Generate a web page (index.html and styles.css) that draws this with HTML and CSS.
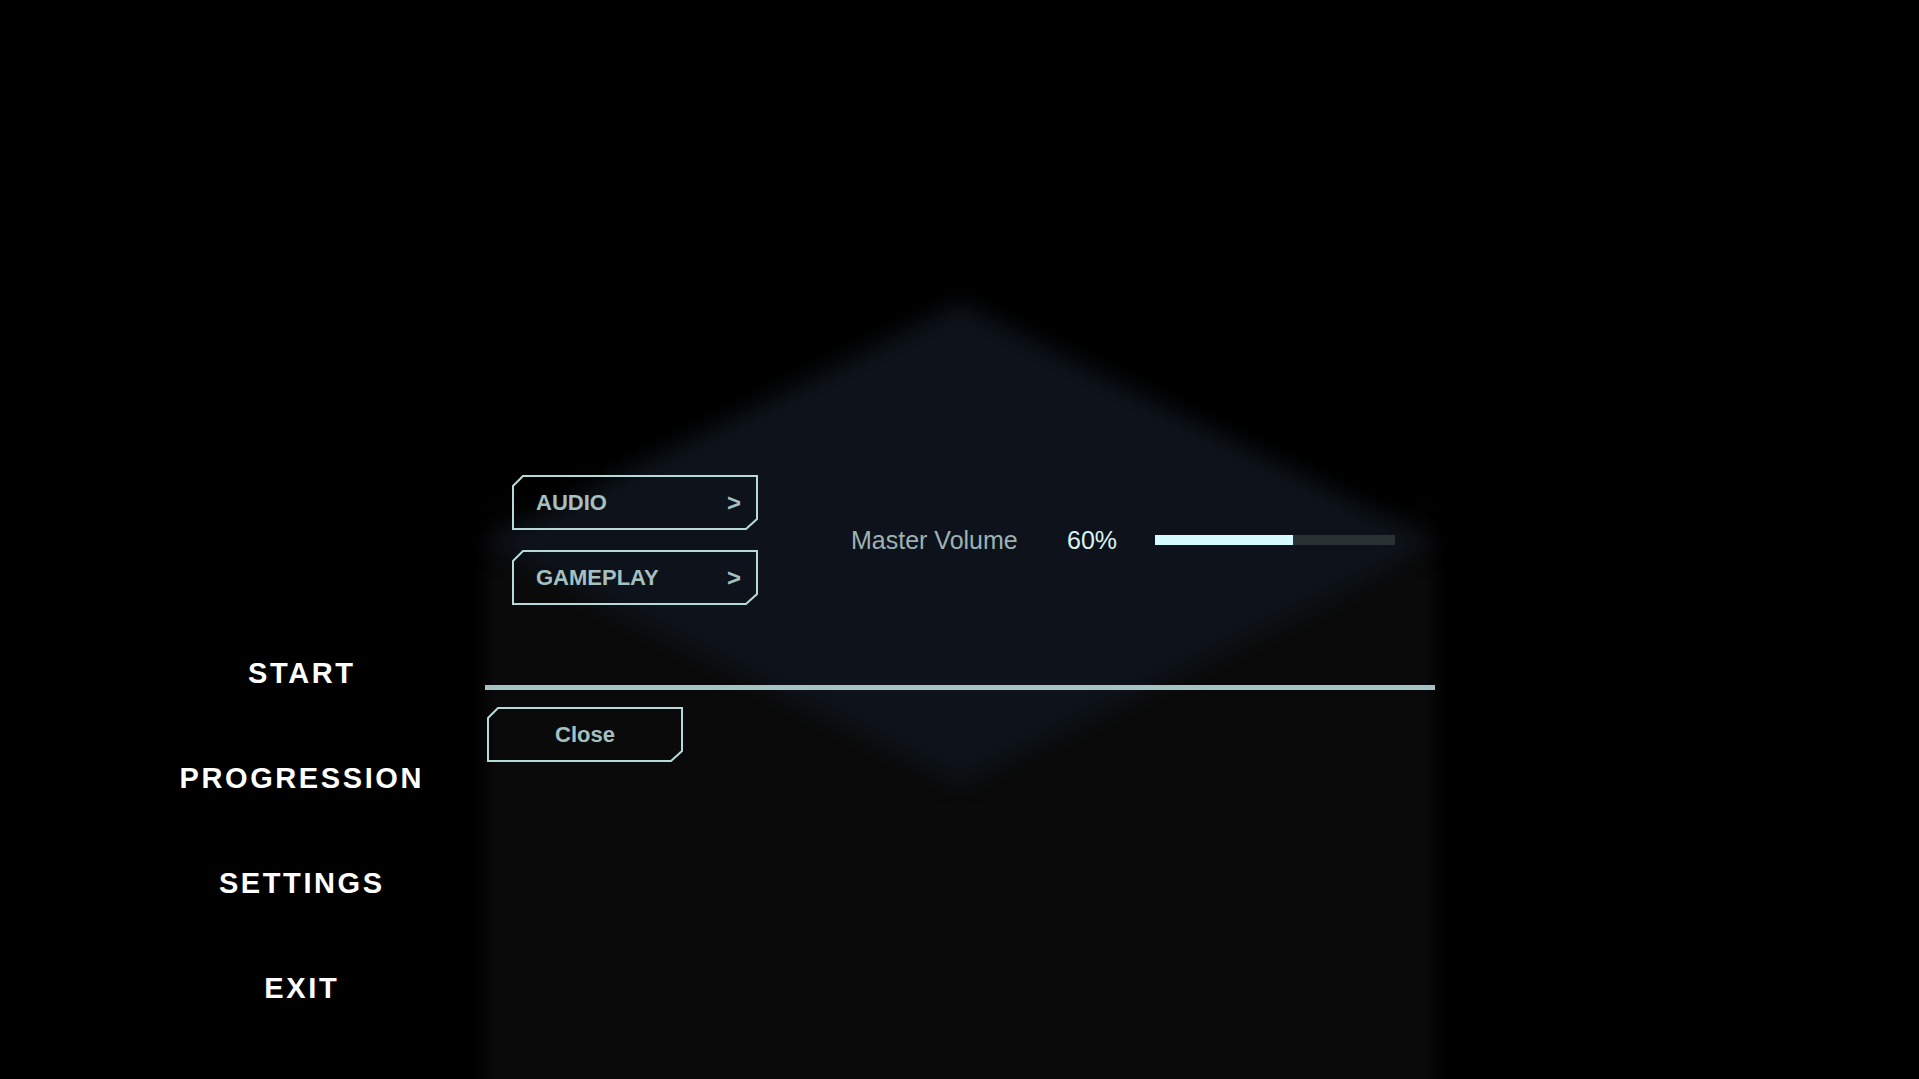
FILE: index.html
```html
<!DOCTYPE html>
<html lang="en">
<head>
    <meta charset="UTF-8">
    <meta name="viewport" content="width=device-width, initial-scale=1.0">
    <title>Settings</title>
    <link rel="stylesheet" href="styles.css">
</head>
<body>
    <div class="screen">
        <nav class="main-menu">
            <a class="menu-item">START</a>
            <a class="menu-item">PROGRESSION</a>
            <a class="menu-item">SETTINGS</a>
            <a class="menu-item">EXIT</a>
        </nav>

        <section class="settings-panel">
            <!-- soft diamond glow behind the panel content -->
            <div class="panel-glow"><div class="glow-shape"></div></div>

            <div class="settings-body">
                <div class="tabs">
                    <button class="tab-btn">
                        <svg class="frame" viewBox="0 0 246 55" preserveAspectRatio="none"><polygon points="11,1 245,1 245,44 234,54 1,54 1,11"/></svg>
                        <span>AUDIO</span>
                        <span class="arrow">&gt;</span>
                    </button>
                    <button class="tab-btn">
                        <svg class="frame" viewBox="0 0 246 55" preserveAspectRatio="none"><polygon points="11,1 245,1 245,44 234,54 1,54 1,11"/></svg>
                        <span>GAMEPLAY</span>
                        <span class="arrow">&gt;</span>
                    </button>
                </div>

                <div class="setting-row">
                    <span class="setting-label">Master Volume</span>
                    <span class="setting-value">60%</span>
                    <div class="slider"><div class="slider-fill" style="width: 57.5%;"></div></div>
                </div>
            </div>

            <div class="divider"></div>

            <button class="close-btn">
                <svg class="frame" viewBox="0 0 196 55" preserveAspectRatio="none"><polygon points="11,1 195,1 195,44 184,54 1,54 1,11"/></svg>
                <span>Close</span>
            </button>
        </section>
    </div>
</body>
</html>
```

FILE: styles.css
```css
html, body {
    margin: 0;
    height: 100%;
    background: #000;
    overflow: hidden;
}
body {
    font-family: "Liberation Sans", Arial, sans-serif;
    color: #fff;
}
.screen {
    display: flex;
    height: 100vh;
}

/* Left main menu */
.main-menu {
    width: 369px;
    padding-left: 116px;
    padding-top: 656px;
    display: flex;
    flex-direction: column;
    align-items: center;
    gap: 71px;
}
.menu-item {
    font-size: 29px;
    line-height: 34px;
    font-weight: bold;
    letter-spacing: 2.6px;
    margin-right: -2.6px;
    color: #fff;
    cursor: pointer;
}

/* Settings panel */
.settings-panel {
    position: relative;
    width: 950px;
    display: flex;
    flex-direction: column;
    align-items: flex-start;
}
.settings-panel::before {
    content: "";
    position: absolute;
    top: 0;
    bottom: 0;
    left: -12px;
    right: -12px;
    background: linear-gradient(to bottom, rgba(10, 10, 10, 0) 490px, #0a0a0a 580px);
    -webkit-mask-image: linear-gradient(to right, transparent 0, #000 24px, #000 calc(100% - 24px), transparent 100%);
    mask-image: linear-gradient(to right, transparent 0, #000 24px, #000 calc(100% - 24px), transparent 100%);
}
.panel-glow {
    position: absolute;
    left: 0;
    top: 304px;
    width: 950px;
    height: 478px;
    filter: blur(11px);
}
.glow-shape {
    width: 100%;
    height: 100%;
    background: #0e131b;
    clip-path: polygon(50% 0, 100% 50%, 50% 100%, 0 50%);
}

.settings-body {
    position: relative;
    display: flex;
    align-items: center;
    padding-top: 475px;
    padding-left: 27px;
}
.tabs {
    display: flex;
    flex-direction: column;
    gap: 20px;
}

.tab-btn,
.close-btn {
    position: relative;
    height: 55px;
    display: flex;
    align-items: center;
    background: none;
    border: none;
    padding: 0;
    font-family: inherit;
    font-size: 22px;
    font-weight: bold;
    color: #a4c0c0;
    cursor: pointer;
}
.tab-btn {
    width: 246px;
    justify-content: space-between;
    padding: 0 17px 0 24px;
}
.close-btn {
    width: 196px;
    justify-content: center;
    margin: 17px 0 0 2px;
}
.frame {
    position: absolute;
    left: 0;
    top: 0;
    width: 100%;
    height: 100%;
}
.frame polygon {
    fill: none;
    stroke: #b6dada;
    stroke-width: 2;
}
.tab-btn span,
.close-btn span {
    position: relative;
}
.arrow {
    font-size: 24px;
}

.setting-row {
    display: flex;
    align-items: center;
    margin-left: 93px;
}
.setting-label {
    font-size: 25px;
    color: #9cb2b2;
    width: 216px;
}
.setting-value {
    font-size: 25px;
    color: #dcf2f2;
    width: 88px;
}
.slider {
    width: 240px;
    height: 10px;
    background: #2a3133;
}
.slider-fill {
    height: 100%;
    background: #d6fbff;
}

.divider {
    position: relative;
    width: 100%;
    height: 5px;
    margin-top: 80px;
    background: #a6c3c3;
}
```
